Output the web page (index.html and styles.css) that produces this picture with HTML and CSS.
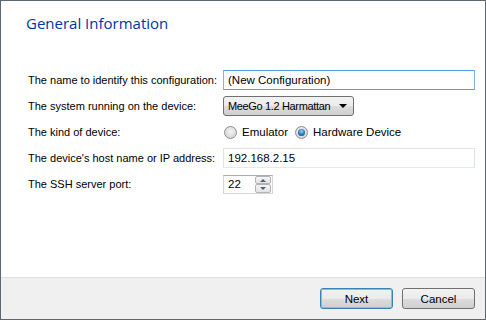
FILE: index.html
```html
<!DOCTYPE html>
<html lang="en">
<head>
    <meta charset="UTF-8">
    <title>General Information</title>
    <link rel="stylesheet" href="styles.css">
</head>
<body>
    <div class="window">
        <div class="page">
            <h1 class="title">General Information</h1>

            <div class="form">
                <label class="label">The name to identify this configuration:</label>
                <div class="field">
                    <div class="textbox focused">(New Configuration)</div>
                </div>

                <label class="label">The system running on the device:</label>
                <div class="field">
                    <div class="combo">
                        <span>MeeGo 1.2 Harmattan</span>
                        <span class="arrow"></span>
                    </div>
                </div>

                <label class="label">The kind of device:</label>
                <div class="field radios">
                    <span class="radio"></span><span class="radio-text">Emulator</span>
                    <span class="radio checked"></span><span class="radio-text">Hardware Device</span>
                </div>

                <label class="label">The device's host name or IP address:</label>
                <div class="field">
                    <div class="textbox">192.168.2.15</div>
                </div>

                <label class="label">The SSH server port:</label>
                <div class="field">
                    <div class="spinbox">
                        <span class="spin-value">22</span>
                        <span class="spin-buttons">
                            <span class="spin-up"></span>
                            <span class="spin-down"></span>
                        </span>
                    </div>
                </div>
            </div>
        </div>

        <div class="footer">
            <button class="btn default">Next</button>
            <button class="btn">Cancel</button>
        </div>
    </div>
</body>
</html>
```

FILE: styles.css
```css
body {
    margin: 0;
    font-family: 'Liberation Sans', Arial, sans-serif;
    font-size: 11px;
    color: #000;
    background: #fff;
}
.window {
    width: 486px;
    height: 320px;
    box-sizing: border-box;
    border: 1px solid #5b6772;
    display: flex;
    flex-direction: column;
    background: #fff;
}
.page {
    flex: 1;
    padding: 12px 10px 0 27px;
}
.title {
    margin: 0;
    font-family: 'Open Sans', 'Noto Sans', sans-serif;
    font-weight: normal;
    font-size: 15px;
    line-height: 20px;
    color: #0033aa;
    margin-left: -2px;
}
.form {
    margin-top: 37px;
    display: grid;
    grid-template-columns: 195px 1fr;
    grid-auto-rows: 20px;
    row-gap: 6px;
    align-items: center;
}
.label {
    white-space: nowrap;
}
.field {
    display: flex;
    align-items: center;
    height: 20px;
    white-space: nowrap;
}
.textbox {
    flex: 1;
    height: 20px;
    box-sizing: border-box;
    border: 1px solid #abadb3;
    border-top-color: #e2e3ea;
    border-left-color: #e2e3ea;
    border-right-color: #dbdfe6;
    border-bottom-color: #e3e9ef;
    padding: 0 4px;
    line-height: 18px;
    font-size: 11.5px;
}
.textbox.focused {
    border-color: #569de5;
    border-left-color: #7eb4ea;
    border-right-color: #7eb4ea;
}
.combo {
    width: 131px;
    height: 20px;
    box-sizing: border-box;
    border: 1px solid #707070;
    border-radius: 3px;
    background: linear-gradient(#f2f2f2 0%, #ebebeb 50%, #dddddd 50%, #cfcfcf 100%);
    display: flex;
    align-items: center;
    justify-content: space-between;
    padding: 0 6px 0 4px;
    font-size: 11px;
    letter-spacing: -0.35px;
}
.arrow {
    width: 0;
    height: 0;
    border-left: 4px solid transparent;
    border-right: 4px solid transparent;
    border-top: 4px solid #000;
}
.radios {
    padding-left: 1px;
}
.radio {
    width: 13px;
    height: 13px;
    box-sizing: border-box;
    border-radius: 50%;
    border: 1px solid #8e8f8f;
    background: radial-gradient(circle at 50% 40%, #f4f4f4 0%, #dcdcdc 60%, #cfcfcf 100%);
    position: relative;
}
.radio.checked::after {
    content: "";
    position: absolute;
    left: 2px;
    top: 2px;
    width: 7px;
    height: 7px;
    border-radius: 50%;
    background: radial-gradient(circle at 50% 35%, #8ad4ff 0%, #1b6fb3 60%, #0d3f6e 100%);
}
.radio-text {
    margin-left: 5px;
    margin-right: 7px;
    font-size: 11.5px;
}
.spinbox {
    width: 50px;
    height: 19px;
    box-sizing: border-box;
    border: 1px solid #d5d5d5;
    border-top-color: #abadb3;
    display: flex;
    align-items: center;
    justify-content: space-between;
    padding-left: 4px;
    font-size: 11.5px;
}
.spin-buttons {
    display: flex;
    flex-direction: column;
    width: 16px;
    height: 17px;
    margin-right: 1px;
}
.spin-up,
.spin-down {
    flex: 1;
    border: 1px solid #b4b4b4;
    border-radius: 2px;
    background: linear-gradient(#f6f6f6, #e2e2e2);
    position: relative;
}
.spin-up::after,
.spin-down::after {
    content: "";
    position: absolute;
    left: 4px;
    border-left: 3px solid transparent;
    border-right: 3px solid transparent;
}
.spin-up::after {
    top: 2px;
    border-bottom: 3px solid #4d6185;
}
.spin-down::after {
    top: 2px;
    border-top: 3px solid #4d6185;
}
.footer {
    height: 41px;
    border-top: 1px solid #dfdfdf;
    background: #f0f0f0;
    display: flex;
    justify-content: flex-end;
    align-items: center;
    gap: 9px;
    padding: 0 10px 0 0;
}
.btn {
    width: 73px;
    height: 21px;
    border: 1px solid #707070;
    border-radius: 3px;
    background: linear-gradient(#f2f2f2 0%, #ebebeb 50%, #dddddd 50%, #cfcfcf 100%);
    font-family: 'Liberation Sans', Arial, sans-serif;
    font-size: 11.5px;
    color: #000;
    padding: 0;
}
.btn.default {
    border-color: #3c7fb1;
    box-shadow: inset 0 0 0 1px #48d8fb;
}
```
